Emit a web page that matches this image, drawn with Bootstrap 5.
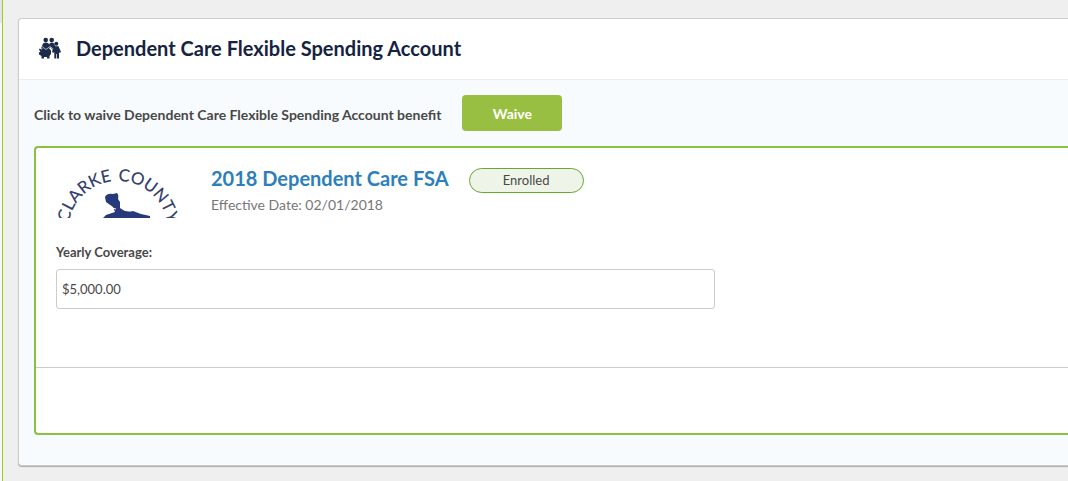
<!DOCTYPE html>
<html lang="en">
<head>
<meta charset="utf-8">
<meta name="viewport" content="width=device-width, initial-scale=1">
<title>Dependent Care Flexible Spending Account</title>
<link href="https://cdn.jsdelivr.net/npm/bootstrap@5.3.0/dist/css/bootstrap.min.css" rel="stylesheet">
<style>
body { font-family: Lato, sans-serif; font-size: 14px; line-height: 20px; color: #484848; background: #efefef; }
.side-strip { width: 3px; border-right: 1px solid #97d01d; background: linear-gradient(#e3e3e3 23px, #f7f7f7 23px); }
.benefit-panel { margin: 18px 0 0 15px; border: 1px solid #ccc; border-right: 0; border-radius: 4px 0 0 4px; background: #f7fbfe; box-shadow: 0 1px 1px #aaa; }
.panel-top { height: 61px; padding: 0 20px 2px; gap: 14px; background: #fff; border-bottom: 1px solid #e8eef1; border-radius: 4px 0 0 0; }
.panel-top h1 { font-size: 20px; line-height: 24px; font-weight: 700; color: #14233f; }
.panel-main { padding: 15px 0 30px 15px; }
.waive-row { gap: 21px; margin-bottom: 15px; }
.waive-row p { padding-top: 3px; }
.btn-waive { --bs-btn-bg: #98bf41; --bs-btn-color: #fff; --bs-btn-hover-bg: #86ab35; --bs-btn-hover-color: #fff; --bs-btn-active-bg: #789b2e; --bs-btn-active-color: #fff; width: 100px; height: 36px; padding: 0; border: 0; border-radius: 4px; font-size: 14px; font-weight: 700; }
.plan-box { border: 2px solid #8bc140; border-right: 0; border-radius: 4px 0 0 4px; background: #fff; }
.plan-body { padding: 20px 24px 58px 20px; }
.plan-head { gap: 30px; margin-bottom: 24px; }
.plan-logo { width: 125px; height: 50px; }
.plan-title { font-size: 20px; line-height: 20px; font-weight: 700; }
.plan-title a { color: #2d7fbb; }
.status-pill { width: 115px; height: 25px; line-height: 23px; border: 1px solid #69a82f; background: #eff4e9; font-size: 13px; }
.effective { color: #777; margin-top: 2px; }
.coverage-label { font-size: 13px; font-weight: 700; margin-bottom: 7px; }
.coverage-input { height: 40px; padding: 0 5px 1px; border-color: #ccc; border-radius: 3px; font-size: 13px; color: #484848; }
.plan-foot { height: 66px; border-top: 1px solid #ccc; }
</style>
</head>
<body>
<div class="d-flex min-vh-100">
  <div class="side-strip flex-shrink-0"></div>
  <main class="flex-grow-1">
    <section class="benefit-panel">
      <header class="panel-top d-flex align-items-center">
        <svg width="23" height="23" viewBox="0 0 23 23" fill="#1c2a4b" aria-hidden="true">
          <circle cx="6.700" cy="3" r="2.300"/><circle cx="12.700" cy="3" r="2.300"/>
          <path d="M2 11.500 4 6.500Q7 4.500 9.500 6.500L12 9.500 9 12Z"/>
          <path d="M10.500 6.500Q13 4.500 15 6.500L17 11 15 14 10 9Z"/>
          <path d="M0 13 .5 11.500 2.500 12.500Q7 9 11 12Q13 14 12 17L10.500 19V21.500H8V20H5V21.500H2.500V19L0 17.500V15.500L1.500 14.500Z"/>
          <path d="m3 9.500 4 3 4-3 4 3" fill="none" stroke="#fff" stroke-width=".6"/>
          <circle cx="17.300" cy="6.800" r="2"/>
          <path d="M15.500 9.300H19.500L22 15 20.500 16 20 15V21.500H18V17H17.300V21.500H15.300V15L14 16 13 14.500Z"/>
        </svg>
        <h1 class="mb-0">Dependent Care Flexible Spending Account</h1>
      </header>
      <div class="panel-main">
        <div class="waive-row d-flex align-items-center">
          <p class="fw-bold mb-0">Click to waive Dependent Care Flexible Spending Account benefit</p>
          <button type="button" class="btn btn-waive">Waive</button>
        </div>
        <article class="plan-box">
          <div class="plan-body">
            <div class="plan-head d-flex align-items-start">
              <svg class="plan-logo flex-shrink-0" viewBox="0 0 125 50" role="img" aria-label="Clarke County">
                <defs><path id="sealArc" d="M12 63A50 50 0 0 1 112 63"/></defs>
                <g font-family="Lato, sans-serif" font-weight="500" font-size="17" fill="#34406f">
                  <text><textPath href="#sealArc" startOffset="46%" text-anchor="end">CLARKE</textPath></text>
                  <text><textPath href="#sealArc" startOffset="50%">COUNTY</textPath></text>
                </g>
                <path fill="#25397b" d="M49 29Q51 25 57 26L61 25Q63 27 62 31L64 34 64 40Q70 45 77 43L85 46 94 48V50H47L50 47 59 44 57 39 50 34Z"/>
                <path d="M49 34Q53 40 60 41" fill="none" stroke="#fff" stroke-width="1"/>
              </svg>
              <div>
                <div class="d-flex align-items-start gap-3">
                  <h2 class="plan-title mb-0 me-1"><a href="#" class="text-decoration-none">2018 Dependent Care FSA</a></h2>
                  <span class="status-pill rounded-pill text-center">Enrolled</span>
                </div>
                <div class="effective">Effective Date: 02/01/2018</div>
              </div>
            </div>
            <div class="row g-0">
              <div class="col-8">
                <label class="coverage-label d-block" for="coverage">Yearly Coverage:</label>
                <input id="coverage" class="form-control coverage-input" type="text" value="$5,000.00">
              </div>
            </div>
          </div>
          <div class="plan-foot"></div>
        </article>
      </div>
    </section>
  </main>
</div>
<script src="https://cdn.jsdelivr.net/npm/bootstrap@5.3.0/dist/js/bootstrap.bundle.min.js"></script>
</body>
</html>
